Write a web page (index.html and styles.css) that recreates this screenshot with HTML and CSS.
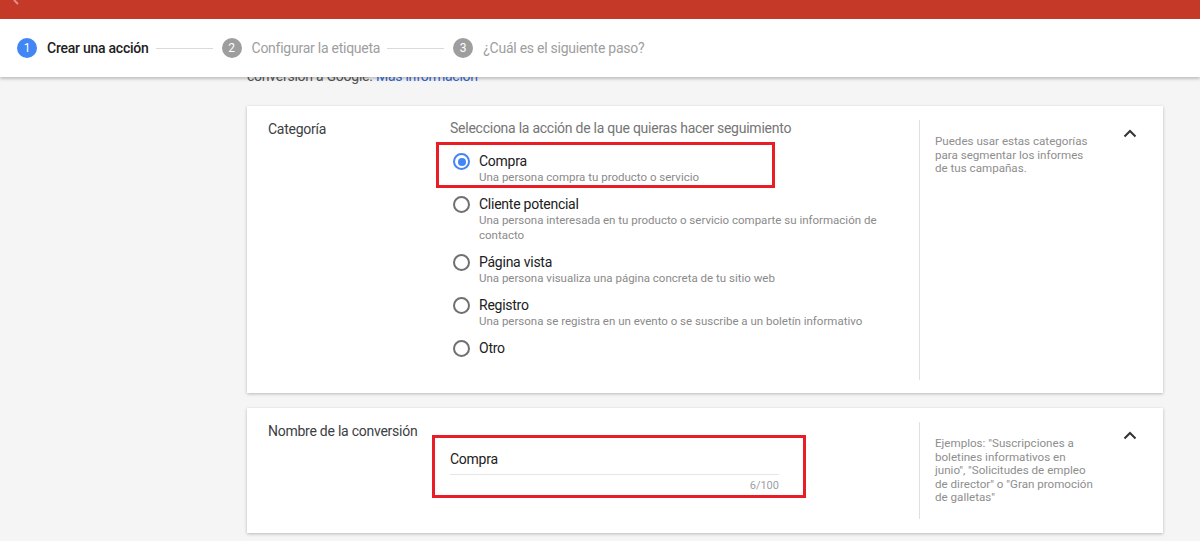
FILE: index.html
```html
<!DOCTYPE html>
<html lang="es">
<head>
<meta charset="utf-8">
<title>Crear una acción</title>
<link rel="stylesheet" href="styles.css">
</head>
<body>
<header class="header">
  <div class="topbar">
    <svg class="back" width="10" height="6" viewBox="0 0 10 6"><path d="M2 0 L6 4" stroke="rgba(255,255,255,0.45)" stroke-width="2" fill="none"/></svg>
  </div>
  <nav class="stepper">
    <div class="step active"><span class="num">1</span><span class="label">Crear una acción</span></div>
    <span class="connector"></span>
    <div class="step"><span class="num">2</span><span class="label">Configurar la etiqueta</span></div>
    <span class="connector"></span>
    <div class="step"><span class="num">3</span><span class="label">¿Cuál es el siguiente paso?</span></div>
  </nav>
</header>
<main class="main">
  <p class="intro">conversión a Google. <a href="#" class="link">Más información</a></p>

  <section class="card">
    <div class="card-label">Categoría</div>
    <div class="card-body">
      <div class="prompt">Selecciona la acción de la que quieras hacer seguimiento</div>
      <div class="options">
        <div class="option highlighted">
          <span class="radio checked"></span>
          <div class="opt-text">
            <div class="opt-title">Compra</div>
            <div class="opt-sub">Una persona compra tu producto o servicio</div>
          </div>
          <span class="mark mark-option"></span>
        </div>
        <div class="option">
          <span class="radio"></span>
          <div class="opt-text">
            <div class="opt-title">Cliente potencial</div>
            <div class="opt-sub">Una persona interesada en tu producto o servicio comparte su información de contacto</div>
          </div>
        </div>
        <div class="option">
          <span class="radio"></span>
          <div class="opt-text">
            <div class="opt-title">Página vista</div>
            <div class="opt-sub">Una persona visualiza una página concreta de tu sitio web</div>
          </div>
        </div>
        <div class="option">
          <span class="radio"></span>
          <div class="opt-text">
            <div class="opt-title">Registro</div>
            <div class="opt-sub">Una persona se registra en un evento o se suscribe a un boletín informativo</div>
          </div>
        </div>
        <div class="option">
          <span class="radio"></span>
          <div class="opt-text">
            <div class="opt-title">Otro</div>
          </div>
        </div>
      </div>
    </div>
    <aside class="card-help">
      <p class="help-text">Puedes usar estas categorías para segmentar los informes de tus campañas.</p>
      <svg class="chevron" width="14" height="9" viewBox="0 0 14 9"><path d="M1.5 7.5 L7 2 L12.5 7.5" fill="none" stroke="#333" stroke-width="2"/></svg>
    </aside>
  </section>

  <section class="card card-name">
    <div class="card-label">Nombre de la conversión</div>
    <div class="card-body">
      <div class="field">
        <div class="field-value">Compra</div>
        <div class="field-line"></div>
        <div class="field-count">6/100</div>
        <span class="mark mark-field"></span>
      </div>
    </div>
    <aside class="card-help">
      <p class="help-text">Ejemplos: "Suscripciones a boletines informativos en junio", "Solicitudes de empleo de director" o "Gran promoción de galletas"</p>
      <svg class="chevron" width="14" height="9" viewBox="0 0 14 9"><path d="M1.5 7.5 L7 2 L12.5 7.5" fill="none" stroke="#333" stroke-width="2"/></svg>
    </aside>
  </section>
</main>
</body>
</html>
```
FILE: styles.css
```css
* { box-sizing: border-box; }
html, body { margin: 0; padding: 0; }
body {
  background: #f5f5f5;
  font-family: Roboto, "Liberation Sans", Arial, sans-serif;
  color: #212121;
  height: 541px;
  overflow: hidden;
}

.header {
  position: relative;
  z-index: 5;
  background: #fff;
  box-shadow: 0 2px 3px rgba(0,0,0,0.22);
}
.topbar {
  height: 19px;
  background: #c53929;
  position: relative;
  overflow: hidden;
}
.back {
  position: absolute;
  left: 12px;
  top: 0;
}
.stepper {
  height: 58px;
  display: flex;
  align-items: center;
  padding-left: 17px;
}
.step {
  display: flex;
  align-items: center;
  gap: 10px;
}
.num {
  width: 20px;
  height: 20px;
  border-radius: 50%;
  background: #9e9e9e;
  color: #fff;
  font-size: 12px;
  display: flex;
  align-items: center;
  justify-content: center;
}
.step .label {
  font-size: 14px;
  letter-spacing: -0.25px;
  color: #9e9e9e;
}
.step.active .num { background: #4285f4; }
.step.active .label { color: #212121; font-weight: 500; }
.connector {
  width: 57px;
  height: 1px;
  background: #dadada;
  margin: 0 9px 0 7px;
}

.main {
  padding-left: 247px;
  padding-right: 37px;
  margin-top: -11px;
}
.intro {
  margin: 0;
  font-size: 14px;
  letter-spacing: -0.25px;
  line-height: 20px;
  color: #555;
}
.link { color: #3367d6; text-decoration: none; }

.card {
  background: #fff;
  box-shadow: 0 1px 3px rgba(0,0,0,0.25);
  display: grid;
  grid-template-columns: 182px 469px 1fr;
  padding-left: 21px;
  margin-top: 20px;
}
.card-name { margin-top: 15px; }
.card-label {
  font-size: 14px;
  letter-spacing: -0.25px;
  line-height: 18px;
  color: #3c4043;
  padding-top: 14px;
}
.card-body {
  padding: 13px 0 36px;
}
.prompt {
  font-size: 14px;
  letter-spacing: -0.25px;
  line-height: 18px;
  color: #757575;
}
.options {
  margin-top: 15px;
  display: flex;
  flex-direction: column;
  gap: 10px;
}
.option {
  position: relative;
  display: flex;
  align-items: flex-start;
  padding-left: 3px;
}
.radio {
  flex: none;
  width: 17px;
  height: 17px;
  border: 2px solid #707070;
  border-radius: 50%;
  margin-top: 1px;
  margin-right: 9px;
  position: relative;
}
.radio.checked { border-color: #4285f4; }
.radio.checked::after {
  content: "";
  position: absolute;
  left: 2.5px;
  top: 2.5px;
  width: 8px;
  height: 8px;
  border-radius: 50%;
  background: #4285f4;
}
.opt-title {
  font-size: 14px;
  letter-spacing: -0.25px;
  line-height: 18px;
  color: #212121;
}
.opt-sub {
  font-size: 11.5px;
  line-height: 15px;
  color: #8a8a8a;
  max-width: 420px;
}
.mark {
  position: absolute;
  border: 3px solid #e81d25;
  pointer-events: none;
}
.mark-option {
  left: -14px;
  top: -10px;
  width: 339px;
  height: 46px;
}

.card-help {
  border-left: 1px solid #e0e0e0;
  margin: 14px 0 13px;
  padding: 15px 26px 0 15px;
  display: flex;
  justify-content: space-between;
  align-items: flex-start;
}
.help-text {
  margin: 0;
  width: 159px;
  font-size: 11.6px;
  line-height: 13.6px;
  color: #8e8e8e;
}
.chevron {
  margin-top: -6px;
}

.card-name .card-body { padding: 42px 0 40px; }
.field {
  position: relative;
  width: 329px;
}
.field-value {
  font-size: 14px;
  letter-spacing: -0.25px;
  line-height: 18px;
  color: #212121;
}
.field-line {
  height: 1px;
  background: #e6e6e6;
  margin-top: 6px;
}
.field-count {
  text-align: right;
  font-size: 11px;
  line-height: 14px;
  color: #9e9e9e;
  margin-top: 4px;
}
.mark-field {
  left: -18px;
  top: -15px;
  width: 374px;
  height: 63px;
}
.card-name .card-help { margin: 14px 0 14px; padding-top: 15px; }
```
